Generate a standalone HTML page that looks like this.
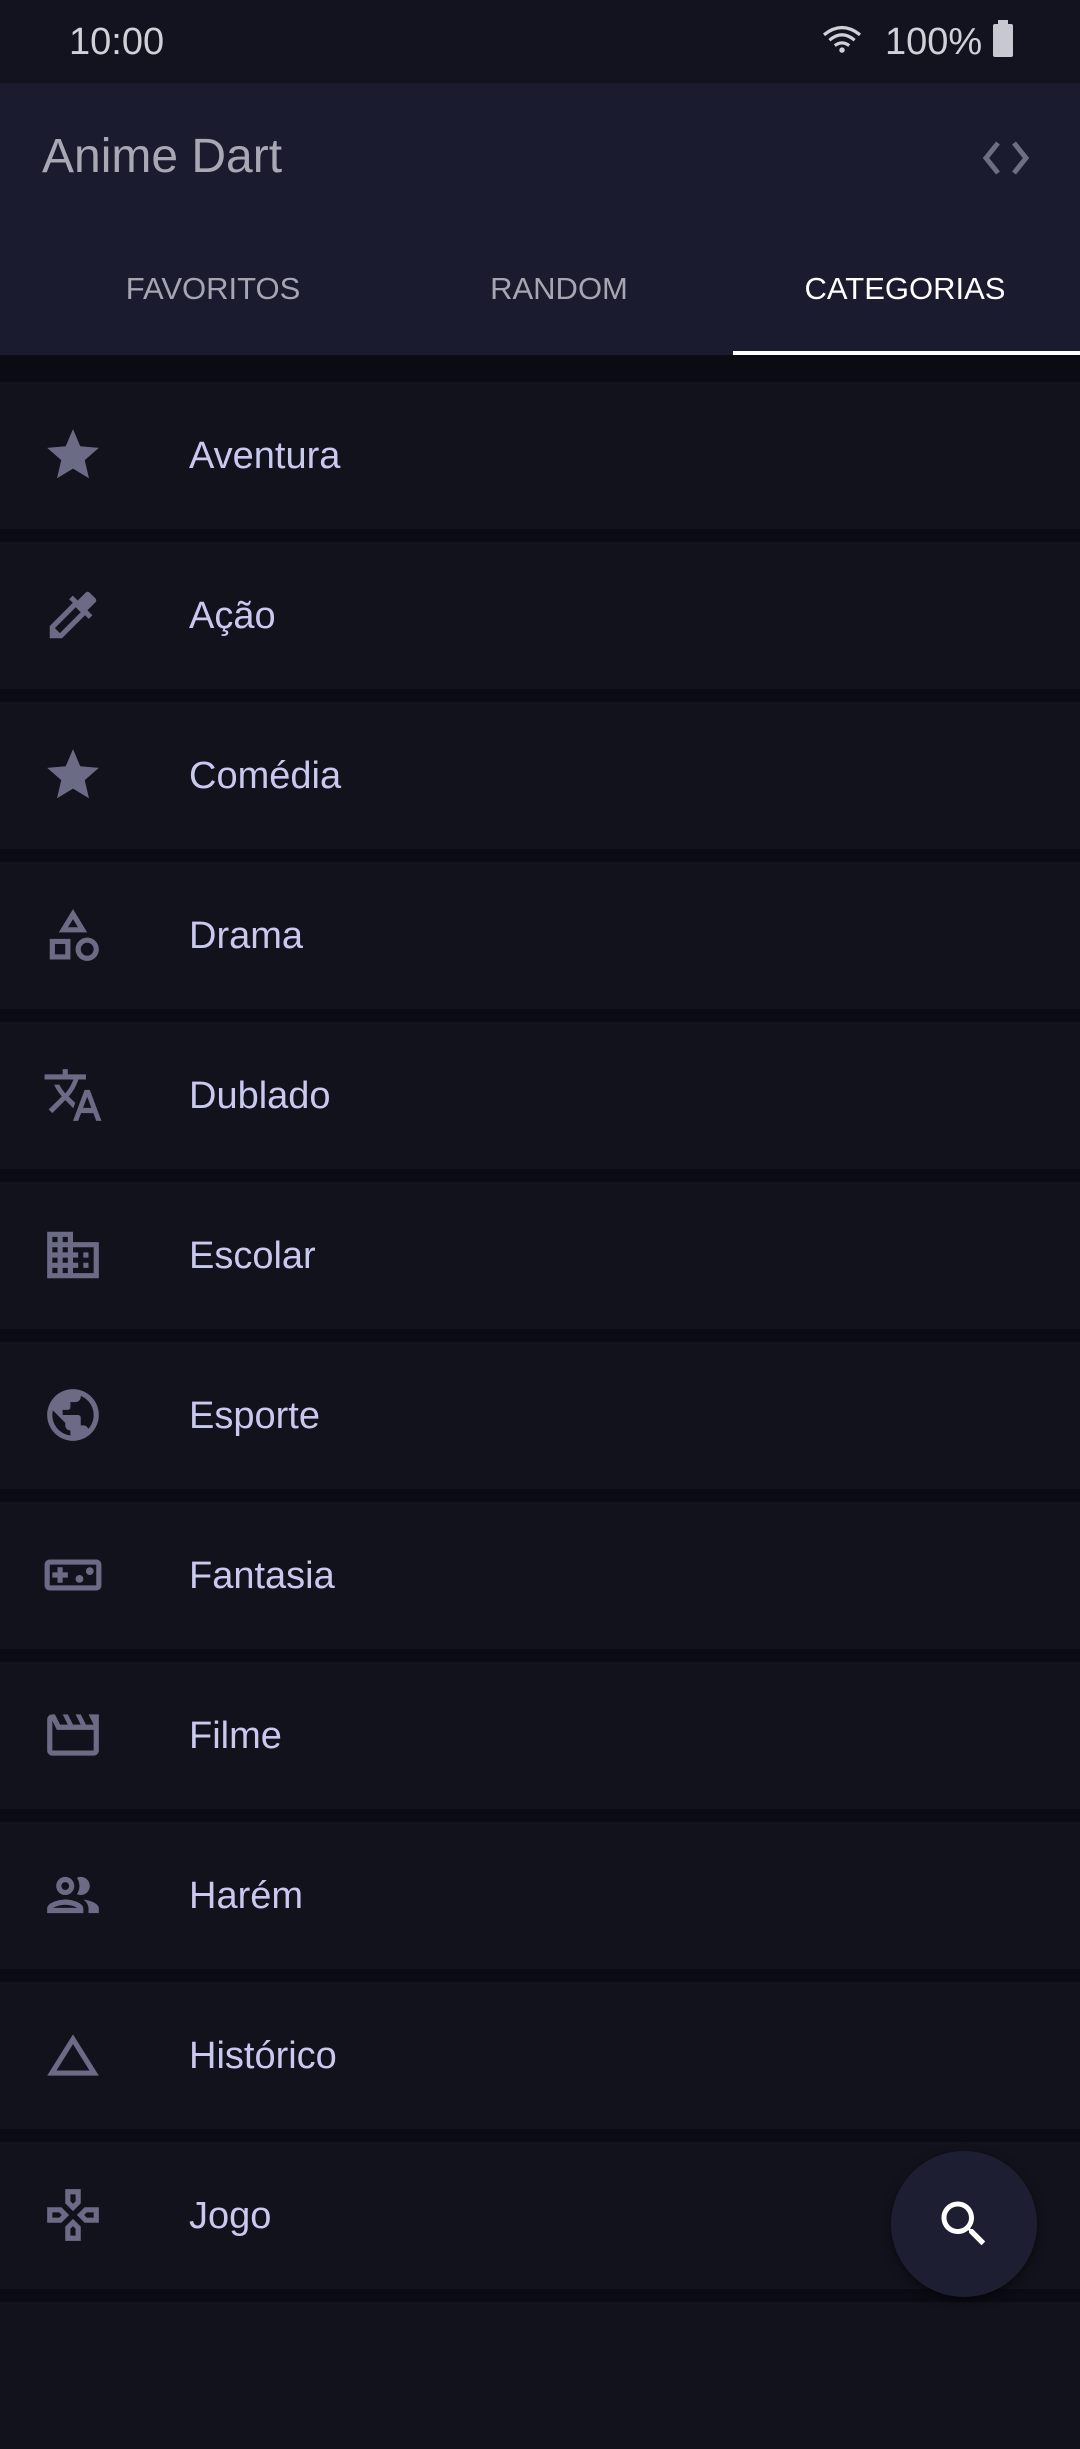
<!DOCTYPE html>
<html><head><meta charset="utf-8"><style>
*{margin:0;padding:0;box-sizing:border-box}
body{width:1080px;height:2340px;background:#0b0b14;font-family:"Liberation Sans",sans-serif;position:relative;overflow:hidden}
.sb{position:absolute;left:0;top:0;width:1080px;height:83px;background:#13131f;color:#d0d0d8}
.hd{position:absolute;left:0;top:83px;width:1080px;height:272px;background:#1a1b2e}
.title{position:absolute;left:42px;font-size:48px;color:#a8a8b4;line-height:56px}
.tab{position:absolute;top:270px;font-size:31px;line-height:38px;color:#a6a6b2;transform:translateX(-50%)}
.ind{position:absolute;left:733px;top:351px;width:347px;height:4px;background:#fff}
.row{position:absolute;left:0;width:1080px;height:147px;background:#12121c}
.row svg{position:absolute;left:42px;top:42px;width:62px;height:62px;fill:#6b6b86}
.row span{position:absolute;left:189px;top:52px;font-size:38px;line-height:44px;color:#c9c8ee}
.fab{position:absolute;left:891px;top:2151px;width:146px;height:146px;border-radius:50%;background:#1d1e31;box-shadow:0 4px 10px rgba(0,0,0,.5)}
</style></head><body>
<div class="sb">
<div style="position:absolute;left:69px;top:20px;font-size:38px;line-height:44px">10:00</div>
<svg style="position:absolute;left:820px;top:24px" width="44" height="36" viewBox="0 0 24 20"><path d="M12 16 A1.5 1.5 0 1 1 12.01 16" fill="#d0d0d8"/><path d="M2 6 Q12 -2 22 6 M5 9 Q12 3 19 9 M8 12 Q12 9 16 12" stroke="#d0d0d8" stroke-width="1.8" fill="none"/></svg>
<div style="position:absolute;left:885px;top:20px;font-size:38px;line-height:44px">100%</div>
<div style="position:absolute;left:993px;top:24px;width:20px;height:33px;background:#c8c8d0;border-radius:2px"></div>
<div style="position:absolute;left:998px;top:20px;width:10px;height:5px;background:#c8c8d0"></div>
</div>
<div class="hd">
<div class="title" style="top:46px">Anime Dart</div>
<svg style="position:absolute;left:978px;top:54px" width="56" height="42" viewBox="0 0 56 42"><path d="M20 6 L8 21 L20 36 M36 6 L48 21 L36 36" stroke="#6e6e82" stroke-width="5" fill="none"/></svg>
</div>
<div class="tab" style="left:213px">FAVORITOS</div>
<div class="tab" style="left:559px">RANDOM</div>
<div class="tab" style="left:905px;color:#fff">CATEGORIAS</div>
<div class="ind"></div>

<div class="row" style="top:382px"><svg viewBox="0 0 24 24"><path d="M12 17.27L18.18 21l-1.64-7.03L22 9.24l-7.19-.61L12 2 9.19 8.63 2 9.24l5.46 4.73L5.82 21z"/></svg><span>Aventura</span></div>
<div class="row" style="top:542px"><svg viewBox="0 0 24 24"><path d="M20.71 5.63l-2.34-2.34c-.39-.39-1.02-.39-1.41 0l-3.12 3.12-1.93-1.91-1.41 1.41 1.42 1.42L3 16.25V21h4.75l8.92-8.92 1.42 1.42 1.41-1.41-1.92-1.92 3.12-3.12c.4-.4.4-1.03.01-1.42zM6.92 19L5 17.08l8.06-8.06 1.92 1.92L6.92 19z"/></svg><span>Ação</span></div>
<div class="row" style="top:702px"><svg viewBox="0 0 24 24"><path d="M12 17.27L18.18 21l-1.64-7.03L22 9.24l-7.19-.61L12 2 9.19 8.63 2 9.24l5.46 4.73L5.82 21z"/></svg><span>Comédia</span></div>
<div class="row" style="top:862px"><svg viewBox="0 0 24 24"><path d="M12 2l-5.5 9h11L12 2zm0 3.84L13.93 9h-3.87L12 5.84zM17.5 13c-2.49 0-4.5 2.01-4.5 4.5s2.01 4.5 4.5 4.5 4.5-2.01 4.5-4.5-2.01-4.5-4.5-4.5zm0 7c-1.38 0-2.5-1.12-2.5-2.5s1.12-2.5 2.5-2.5 2.5 1.12 2.5 2.5-1.12 2.5-2.5 2.5zM3 21.5h8v-8H3v8zm2-6h4v4H5v-4z"/></svg><span>Drama</span></div>
<div class="row" style="top:1022px"><svg viewBox="0 0 24 24"><path d="M12.87 15.07l-2.54-2.51.03-.03c1.74-1.94 2.98-4.17 3.71-6.53H17V4h-7V2H8v2H1v1.99h11.17C11.5 7.92 10.44 9.75 9 11.35 8.07 10.32 7.3 9.19 6.69 8h-2c.73 1.63 1.73 3.17 2.98 4.56l-5.09 5.02L4 19l5-5 3.11 3.11.76-2.04zM18.5 10h-2L12 22h2l1.12-3h4.75L21 22h2l-4.5-12zm-2.62 7l1.62-4.33L19.12 17h-3.24z"/></svg><span>Dublado</span></div>
<div class="row" style="top:1182px"><svg viewBox="0 0 24 24"><path d="M12 7V3H2v18h20V7H10zM6 19H4v-2h2v2zm0-4H4v-2h2v2zm0-4H4V9h2v2zm0-4H4V5h2v2zm4 12H8v-2h2v2zm0-4H8v-2h2v2zm0-4H8V9h2v2zm0-4H8V5h2v2zm10 12h-8v-2h2v-2h-2v-2h2v-2h-2V9h8v10zm-2-8h-2v2h2v-2zm0 4h-2v2h2v-2z"/></svg><span>Escolar</span></div>
<div class="row" style="top:1342px"><svg viewBox="0 0 24 24"><path d="M12 2C6.48 2 2 6.48 2 12s4.48 10 10 10 10-4.48 10-10S17.52 2 12 2zm-1 17.93c-3.95-.49-7-3.85-7-7.93 0-.62.08-1.21.21-1.79L9 15v1c0 1.1.9 2 2 2v1.93zm6.9-2.54c-.26-.81-1-1.39-1.9-1.39h-1v-3c0-.55-.45-1-1-1H8v-2h2c.55 0 1-.45 1-1V7h2c1.1 0 2-.9 2-2v-.41c2.93 1.19 5 4.06 5 7.41 0 2.08-.8 3.97-2.1 5.39z"/></svg><span>Esporte</span></div>
<div class="row" style="top:1502px"><svg viewBox="0 0 24 24"><path d="M21 6H3c-1.1 0-2 .9-2 2v8c0 1.1.9 2 2 2h18c1.1 0 2-.9 2-2V8c0-1.1-.9-2-2-2zm0 10H3V8h18v8zM6 15h2v-2h2v-2H8V9H6v2H4v2h2z"/><circle cx="14.5" cy="13.5" r="1.5"/><circle cx="18.5" cy="10.5" r="1.5"/></svg><span>Fantasia</span></div>
<div class="row" style="top:1662px"><svg viewBox="0 0 24 24"><path d="M4 6.47L5.76 10H20v8H4V6.47M22 4h-4l2 4h-3l-2-4h-2l2 4h-3l-2-4H8l2 4H7L5 4H4c-1.1 0-1.99.9-1.99 2L2 18c0 1.1.9 2 2 2h16c1.1 0 2-.9 2-2V4z"/></svg><span>Filme</span></div>
<div class="row" style="top:1822px"><svg viewBox="0 0 24 24"><path d="M9 13.75c-2.34 0-7 1.17-7 3.5V19h14v-1.75c0-2.33-4.66-3.5-7-3.5zM4.34 17c.84-.58 2.87-1.25 4.66-1.25s3.82.67 4.66 1.25H4.340zM9 12c1.930 0 3.5-1.57 3.5-3.5S10.93 5 9 5 5.5 6.57 5.5 8.5 7.07 12 9 12zm0-5c.83 0 1.5.67 1.5 1.5S9.83 10 9 10s-1.5-.67-1.5-1.5S8.17 7 9 7zm7.04 6.81c1.16.84 1.96 1.96 1.96 3.44V19h4v-1.75c0-2.02-3.5-3.17-5.96-3.44zM15 12c1.93 0 3.5-1.57 3.5-3.5S16.93 5 15 5c-.54 0-1.04.13-1.5.35.63.89 1 1.98 1 3.15s-.37 2.26-1 3.15c.46.22.96.35 1.5.35z"/></svg><span>Harém</span></div>
<div class="row" style="top:1982px"><svg viewBox="0 0 24 24"><path d="M12 7.77L18.39 18H5.61L12 7.77M12 4L2 20h20L12 4z"/></svg><span>Histórico</span></div>
<div class="row" style="top:2142px"><svg viewBox="0 0 24 24"><path d="M13 4v2.67l-1 1-1-1V4h2m7 7v2h-2.67l-1-1 1-1H20M6.67 11l1 1-1 1H4v-2h2.67M12 16.33l1 1V20h-2v-2.67l1-1M15 2H9v5.5l3 3 3-3V2zm7 7h-5.5l-3 3 3 3H22V9zM7.5 9H2v6h5.5l3-3-3-3zm4.5 4.5l-3 3V22h6v-5.5l-3-3z"/></svg><span>Jogo</span></div>
<div class="row" style="top:2302px"></div>

<div class="fab"><svg style="position:absolute;left:43px;top:43px" width="60" height="60" viewBox="0 0 24 24"><path fill="#fff" d="M15.5 14h-.79l-.28-.27C15.41 12.59 16 11.11 16 9.5 16 5.91 13.09 3 9.5 3S3 5.91 3 9.5 5.91 16 9.5 16c1.61 0 3.090-.59 4.23-1.57l.27.28v.79l5 4.99L20.49 19l-4.99-5zm-6 0C7.01 14 5 11.99 5 9.5S7.01 5 9.5 5 14 7.01 14 9.5 11.99 14 9.5 14z"/></svg></div>
</body></html>
